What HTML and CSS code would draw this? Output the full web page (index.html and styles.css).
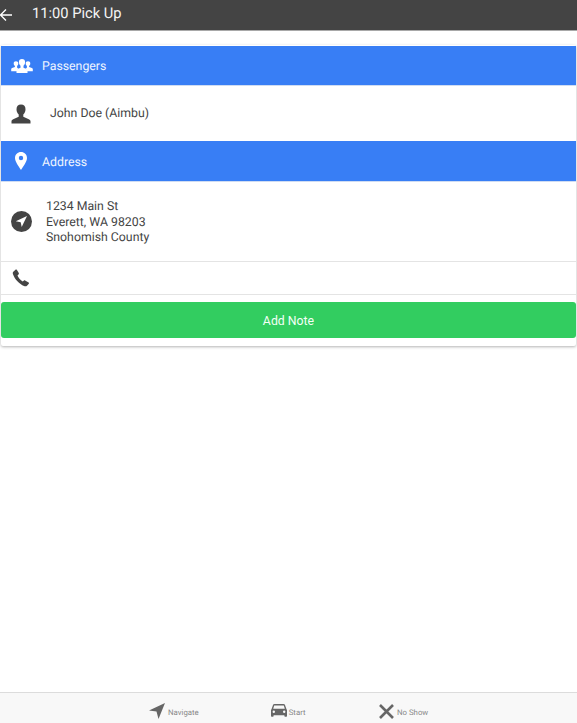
FILE: index.html
```html
<!DOCTYPE html>
<html lang="en">
<head>
    <meta charset="UTF-8">
    <title>11:00 Pick Up</title>
    <link rel="stylesheet" href="styles.css">
</head>
<body>
    <div class="page">
        <header class="toolbar">
            <svg class="back-icon" width="14" height="14" viewBox="0 0 14 14"><path d="M13 7H2M7 1.500 1.500 7 7 12.500" fill="none" stroke="#fff" stroke-width="1.300"/></svg>
            <h1>11:00 Pick Up</h1>
        </header>

        <main class="content">
            <section class="card">
                <div class="divider-row">
                    <svg class="icon-people" width="22" height="14" viewBox="0 0 22 16" preserveAspectRatio="none" fill="#fff">
                        <path d="M5 2.500c1.500 0 2.300 1 2.300 2.500 0 1.200-.5 2.200-1.200 2.800v2.200l1.500.7c-.8.400-1.600 1-1.600 2.300v1H.2v-2.500c0-.6.300-1 .9-1.200l2.800-1.100V7.800C3.200 7.200 2.700 6.200 2.700 5c0-1.500.8-2.500 2.300-2.500z"/>
                        <path d="M17 2.500c-1.500 0-2.300 1-2.300 2.500 0 1.200.5 2.200 1.200 2.800v2.200l-1.500.7c.8.400 1.600 1 1.600 2.300v1h5.800v-2.500c0-.6-.3-1-.9-1.200l-2.800-1.100V7.800c.7-.6 1.200-1.600 1.200-2.800 0-1.500-.8-2.500-2.300-2.500z"/>
                        <path d="M11 0c2 0 3.100 1.300 3.100 3.500 0 1.800-.6 3.300-1.600 4.200v2.400l3 1.300c.7.300 1 .8 1 1.400V16H5.500v-3.200c0-.6.300-1.100 1-1.400l3-1.300V7.700c-1-.9-1.600-2.400-1.600-4.200C7.900 1.300 9 0 11 0z"/>
                    </svg>
                    <span>Passengers</span>
                </div>
                <div class="passenger-row">
                    <svg width="20" height="20" viewBox="0 0 20 20" fill="#444"><path d="M10 .5c3 0 4.500 2 4.500 4.800 0 2.300-.9 4.200-2.200 5.300v2.100l5.500 2.500c1 .5 1.700 1.100 1.700 2.100v2.200H.5v-2.200c0-1 .7-1.600 1.700-2.100l5.500-2.500v-2.100C6.400 9.500 5.500 7.600 5.500 5.300 5.500 2.500 7 .5 10 .5z"/></svg>
                    <span>John Doe (Aimbu)</span>
                </div>
                <div class="divider-row divider-address">
                    <svg class="icon-pin" width="12" height="18" viewBox="0 0 12 18"><path fill-rule="evenodd" fill="#fff" d="M6 0c3.300 0 6 2.600 6 5.900C12 9.800 8 14.500 6 18 4 14.500 0 9.800 0 5.900 0 2.600 2.700 0 6 0zm0 3.800a2.200 2.200 0 1 0 0 4.400 2.200 2.200 0 0 0 0-4.400z"/></svg>
                    <span>Address</span>
                </div>
                <div class="address-row">
                    <svg width="21" height="21" viewBox="0 0 21 21"><circle cx="10.500" cy="10.500" r="10.500" fill="#444"/><path d="M16 5 4.800 10.300l4.900.9 1 4.900z" fill="#fff"/></svg>
                    <div class="address-text">
                        <div>1234 Main St</div>
                        <div>Everett, WA 98203</div>
                        <div>Snohomish County</div>
                    </div>
                </div>
                <div class="phone-row">
                    <svg width="18" height="18" viewBox="0 0 18 18" fill="#444"><path d="M1.300 2.800 3.700.6c.4-.3.900-.2 1.100.2l2 3.300c.2.400.2.800-.1 1.100L5.500 6.400c.6 1.700 2.900 4.800 5.200 6l1.300-.9c.4-.2.800-.2 1.100 0l3.500 2c.5.300.5.800.2 1.200l-1.800 2c-.6.700-1.800.8-3 .4C7.600 15 2.600 10.200 1 5.200.6 4.200.7 3.400 1.300 2.800z"/></svg>
                </div>
                <div class="note-wrap">
                    <button class="note-btn">Add Note</button>
                </div>
            </section>
        </main>

        <footer class="tabs">
            <div class="tab">
                <svg width="16" height="16" viewBox="0 0 16 16" fill="#666"><path d="M16 0 0 7.500l7.500 1.100L9.500 16z"/></svg>
                <span>Navigate</span>
            </div>
            <div class="tab tab-start">
                <svg width="16" height="14" viewBox="0 0 16 14"><path fill-rule="evenodd" fill="#666" d="M3.500 0h9c.8 0 1.300.4 1.500 1l1.500 4.200c.3.300.5.700.5 1.100V12c0 .4-.3.700-.7.700h-1.200c-.4 0-.7-.3-.7-.7v-.8H2.600v.8c0 .4-.3.700-.7.700H.7c-.4 0-.7-.3-.7-.7V6.300c0-.4.200-.8.500-1.100L2 1c.2-.6.700-1 1.500-1zM3.200 1.500 2.200 4.800h11.600l-1-3.300zM2.800 6.500a1.200 1.200 0 1 0 0 2.400 1.200 1.200 0 0 0 0-2.400zm10.400 0a1.200 1.200 0 1 0 0 2.400 1.200 1.200 0 0 0 0-2.400z"/></svg>
                <span>Start</span>
            </div>
            <div class="tab tab-noshow">
                <svg width="15" height="15" viewBox="0 0 15 15"><path d="M1 1l13 13M14 1 1 14" stroke="#666" stroke-width="2.600" fill="none"/></svg>
                <span>No Show</span>
            </div>
        </footer>
    </div>
</body>
</html>
```

FILE: styles.css
```css
html, body {
    height: 100%;
}

body {
    margin: 0;
    font-family: Roboto, sans-serif;
    color: #444;
    background-color: #fff;
    text-rendering: geometricPrecision;
}

.page {
    height: 100%;
    display: flex;
    flex-direction: column;
}

.toolbar {
    height: 30px;
    flex-shrink: 0;
    display: flex;
    align-items: center;
    background-color: #444;
    border-bottom: 1px solid #a8a8a8;
}

.back-icon {
    margin-left: -1px;
    margin-right: 19px;
}

.toolbar h1 {
    margin: 0 0 4px;
    font-size: 14.700px;
    font-weight: 400;
    color: #f4f4f4;
}

.content {
    flex: 1;
    padding: 14px 0 0 1px;
}

.card {
    width: 575px;
    height: 301px;
    box-sizing: border-box;
    padding-top: 1px;
    background-color: #fff;
    box-shadow: 0 1px 3px rgba(0, 0, 0, 0.3);
    border-radius: 2px;
}

.divider-row {
    height: 39px;
    padding-left: 10px;
    display: flex;
    align-items: center;
    font-size: 12.300px;
    color: #f0f5ff;
    background-color: #387ef5;
    border-bottom: 1px solid #cfdcf2;
}

.divider-row span {
    margin-left: 9px;
    padding-top: 2px;
}

.divider-address {
    height: 40px;
}

.divider-address span {
    margin-left: 11px;
    padding-top: 3px;
}

.icon-pin {
    margin: 0 4px 0 4px;
}

.passenger-row {
    height: 55px;
    padding-left: 10px;
    display: flex;
    align-items: center;
    font-size: 12.300px;
}

.passenger-row span {
    margin-left: 19px;
}

.address-row {
    height: 79px;
    padding-left: 10px;
    display: flex;
    align-items: center;
    font-size: 12.300px;
    line-height: 15.500px;
    border-bottom: 1px solid #e4e4e4;
}

.address-text {
    margin-left: 14px;
    padding-top: 4px;
}

.phone-row {
    height: 32px;
    padding-left: 11px;
    display: flex;
    align-items: center;
    border-bottom: 1px solid #e4e4e4;
}

.note-wrap {
    padding-top: 7px;
}

.note-btn {
    display: block;
    width: 100%;
    height: 36px;
    padding: 2px 0 0;
    border: none;
    border-radius: 3px;
    font-family: Roboto, sans-serif;
    font-size: 12.300px;
    color: #f4fff7;
    background-color: #32cd60;
}

.tabs {
    height: 24px;
    flex-shrink: 0;
    display: flex;
    padding: 6px 0 0 149px;
    align-items: center;
    background-color: #f8f8f8;
    border-top: 1px solid #dcdcdc;
}

.tab {
    display: flex;
    align-items: center;
    font-size: 7.800px;
    color: #888;
}

.tab span {
    margin-left: 3px;
    padding-top: 2px;
}

.tab svg {
    flex-shrink: 0;
}

.tab-start {
    margin-left: 72px;
}

.tab-start span {
    margin-left: 2px;
}

.tab-noshow {
    margin-left: 73.500px;
}
```
